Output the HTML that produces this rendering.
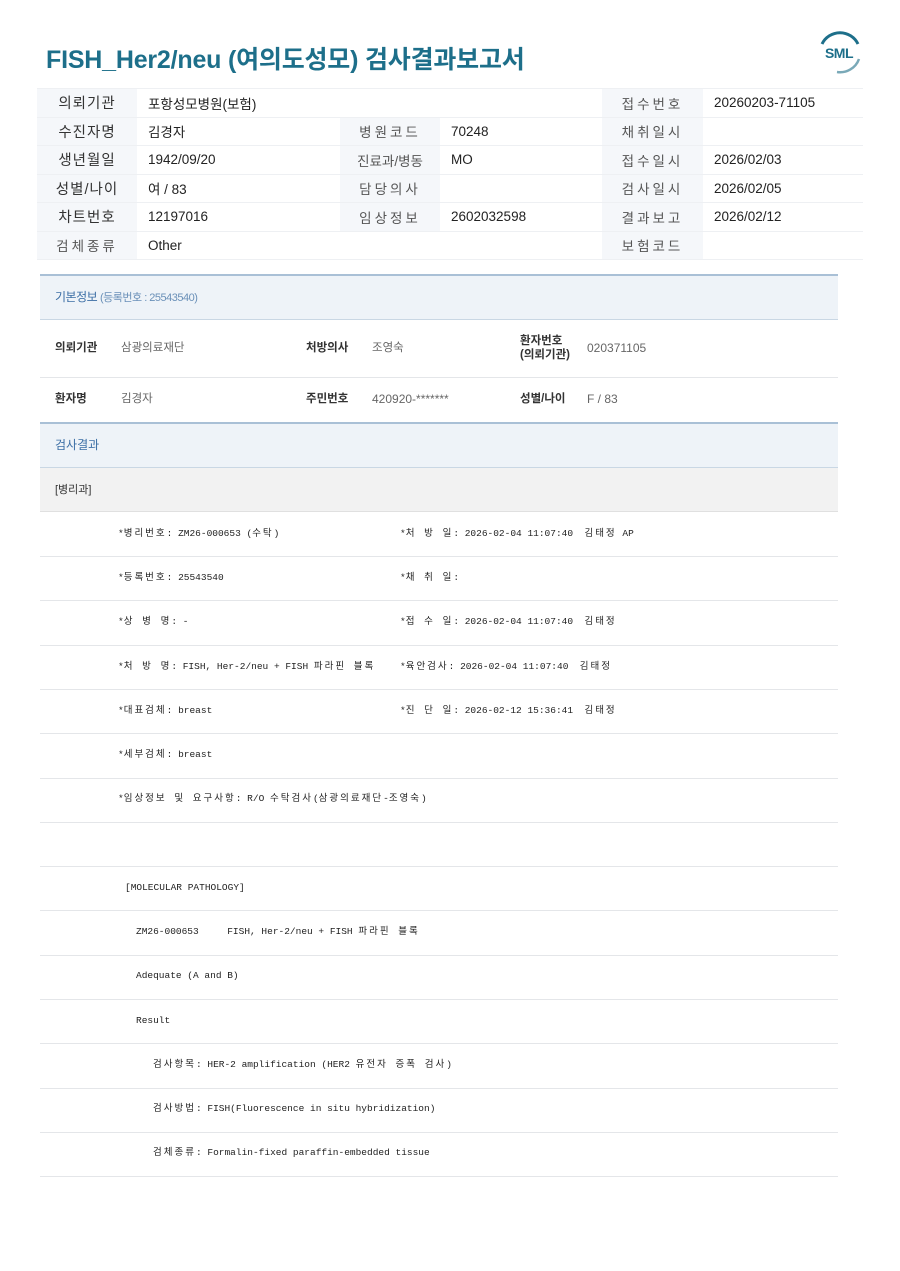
<!DOCTYPE html>
<html><head><meta charset="utf-8"><style>
*{margin:0;padding:0;box-sizing:border-box}
body{width:900px;height:1271px;background:#fff;position:relative;font-family:"Liberation Sans","Noto Sans CJK KR",sans-serif;color:#222;overflow:hidden}
.a{position:absolute;white-space:pre;line-height:14px}
h1{position:absolute;left:46px;top:40px;font-size:25px;font-weight:bold;color:#1d6f8a;letter-spacing:-0.2px;white-space:nowrap}
table.t{position:absolute;left:37px;top:88px;width:826px;border-collapse:collapse;font-size:13.5px}
table.t td{height:28.5px;border-top:1px solid #eef0f3;border-bottom:1px solid #eef0f3;padding:0 11px}
table.t td.l{background:#f5f7fa;color:#555;text-align:center;letter-spacing:0}
table.t td.l2{background:#f5f7fa;color:#555;text-align:center;letter-spacing:3px}
table.t td.l0{background:#f5f7fa;color:#333;text-align:center;font-size:14.5px;letter-spacing:1px}
.box{position:absolute;left:40px;width:798px}
.mono{font-family:"Liberation Mono","Noto Sans CJK KR",monospace;font-size:9.5px;color:#222}
.mono b{font-weight:normal;letter-spacing:2px}
.line{position:absolute;left:40px;width:798px;height:1px;background:#e4e6e9}
</style></head><body>
<h1>FISH_Her2/neu (여의도성모) 검사결과보고서</h1>
<svg class="a" style="left:817px;top:29px" width="46" height="46" viewBox="0 0 46 46">
<path d="M5 15 A20 20 0 0 1 41 15" fill="none" stroke="#1d6f8a" stroke-width="3"/>
<path d="M42 30 A20 20 0 0 1 20 43" fill="none" stroke="#7aa9b8" stroke-width="2.5"/>
<text x="22" y="29" text-anchor="middle" font-family="Liberation Sans" font-weight="bold" font-size="14" fill="#1d6f8a" letter-spacing="-0.5">SML</text>
</svg>
<table class="t">
<colgroup><col style="width:100px"><col style="width:203px"><col style="width:100px"><col style="width:162px"><col style="width:101px"><col></colgroup>
<tr><td class="l0">의뢰기관</td><td colspan="3">포항성모병원(보험)</td><td class="l2">접수번호</td><td>20260203-71105</td></tr>
<tr><td class="l0">수진자명</td><td>김경자</td><td class="l2">병원코드</td><td>70248</td><td class="l2">채취일시</td><td></td></tr>
<tr><td class="l0">생년월일</td><td>1942/09/20</td><td class="l">진료과/병동</td><td>MO</td><td class="l2">접수일시</td><td>2026/02/03</td></tr>
<tr><td class="l0">성별/나이</td><td>여 / 83</td><td class="l2">담당의사</td><td></td><td class="l2">검사일시</td><td>2026/02/05</td></tr>
<tr><td class="l0">차트번호</td><td>12197016</td><td class="l2">임상정보</td><td>2602032598</td><td class="l2">결과보고</td><td>2026/02/12</td></tr>
<tr><td class="l2">검체종류</td><td colspan="3">Other</td><td class="l2">보험코드</td><td></td></tr>
</table>

<div class="box" style="top:274px;height:46px;background:#eef3f8;border-top:2px solid #a9c0d6;border-bottom:1px solid #c9d7e4"></div>
<div class="a" style="left:55px;top:290px;font-size:12px;color:#3b6ea5;letter-spacing:-0.5px">기본정보 <span style="font-size:11px;color:#6a90b8">(등록번호 : 25543540)</span></div>
<div class="line" style="top:377px"></div>
<div class="a" style="left:55px;top:341px;font-size:11.5px;font-weight:bold;color:#333">의뢰기관</div>
<div class="a" style="left:121px;top:341px;font-size:11.5px;color:#666">삼광의료재단</div>
<div class="a" style="left:306px;top:341px;font-size:11.5px;font-weight:bold;color:#333">처방의사</div>
<div class="a" style="left:372px;top:341px;font-size:11.5px;color:#666">조영숙</div>
<div class="a" style="left:520px;top:334px;font-size:11.5px;font-weight:bold;color:#333">환자번호
(의뢰기관)</div>
<div class="a" style="left:587px;top:341px;font-size:12px;color:#666">020371105</div>
<div class="a" style="left:55px;top:392px;font-size:11.5px;font-weight:bold;color:#333">환자명</div>
<div class="a" style="left:121px;top:392px;font-size:11.5px;color:#666">김경자</div>
<div class="a" style="left:306px;top:392px;font-size:11.5px;font-weight:bold;color:#333">주민번호</div>
<div class="a" style="left:372px;top:392px;font-size:12px;color:#666">420920-*******</div>
<div class="a" style="left:520px;top:392px;font-size:11.5px;font-weight:bold;color:#333">성별/나이</div>
<div class="a" style="left:587px;top:392px;font-size:12px;color:#666">F / 83</div>

<div class="box" style="top:422px;height:46px;background:#eef3f8;border-top:2px solid #a9c0d6;border-bottom:1px solid #c9d7e4"></div>
<div class="a" style="left:55px;top:438px;font-size:12px;color:#3b6ea5">검사결과</div>
<div class="box" style="top:468px;height:44px;background:#f2f2f2;border-bottom:1px solid #e0e0e0"></div>
<div class="a" style="left:55px;top:483px;font-size:11px;color:#333">[병리과]</div>

<div class="line" style="top:556px"></div><div class="line" style="top:600px"></div><div class="line" style="top:645px"></div><div class="line" style="top:689px"></div><div class="line" style="top:733px"></div><div class="line" style="top:778px"></div><div class="line" style="top:822px"></div><div class="line" style="top:866px"></div><div class="line" style="top:910px"></div><div class="line" style="top:955px"></div><div class="line" style="top:999px"></div><div class="line" style="top:1043px"></div><div class="line" style="top:1088px"></div><div class="line" style="top:1132px"></div><div class="line" style="top:1176px"></div>

<div class="a mono" style="left:118px;top:527px">*<b>병리번호</b>: ZM26-000653 (<b>수탁</b>)</div>
<div class="a mono" style="left:400px;top:527px">*<b>처 방 일</b>: 2026-02-04 11:07:40  <b>김태정</b> AP</div>
<div class="a mono" style="left:118px;top:571px">*<b>등록번호</b>: 25543540</div>
<div class="a mono" style="left:400px;top:571px">*<b>채 취 일</b>:</div>
<div class="a mono" style="left:118px;top:615px">*<b>상 병 명</b>: -</div>
<div class="a mono" style="left:400px;top:615px">*<b>접 수 일</b>: 2026-02-04 11:07:40  <b>김태정</b></div>
<div class="a mono" style="left:118px;top:660px">*<b>처 방 명</b>: FISH, Her-2/neu + FISH <b>파라핀 블록</b></div>
<div class="a mono" style="left:400px;top:660px">*<b>육안검사</b>: 2026-02-04 11:07:40  <b>김태정</b></div>
<div class="a mono" style="left:118px;top:704px">*<b>대표검체</b>: breast</div>
<div class="a mono" style="left:400px;top:704px">*<b>진 단 일</b>: 2026-02-12 15:36:41  <b>김태정</b></div>
<div class="a mono" style="left:118px;top:748px">*<b>세부검체</b>: breast</div>
<div class="a mono" style="left:118px;top:792px">*<b>임상정보 및 요구사항</b>: R/O <b>수탁검사</b>(<b>삼광의료재단</b>-<b>조영숙</b>)</div>
<div class="a mono" style="left:125px;top:881px">[MOLECULAR PATHOLOGY]</div>
<div class="a mono" style="left:136px;top:925px">ZM26-000653     FISH, Her-2/neu + FISH <b>파라핀 블록</b></div>
<div class="a mono" style="left:136px;top:969px">Adequate (A and B)</div>
<div class="a mono" style="left:136px;top:1014px">Result</div>
<div class="a mono" style="left:153px;top:1058px"><b>검사항목</b>: HER-2 amplification (HER2 <b>유전자 증폭 검사</b>)</div>
<div class="a mono" style="left:153px;top:1102px"><b>검사방법</b>: FISH(Fluorescence in situ hybridization)</div>
<div class="a mono" style="left:153px;top:1146px"><b>검체종류</b>: Formalin-fixed paraffin-embedded tissue</div>
</body></html>
